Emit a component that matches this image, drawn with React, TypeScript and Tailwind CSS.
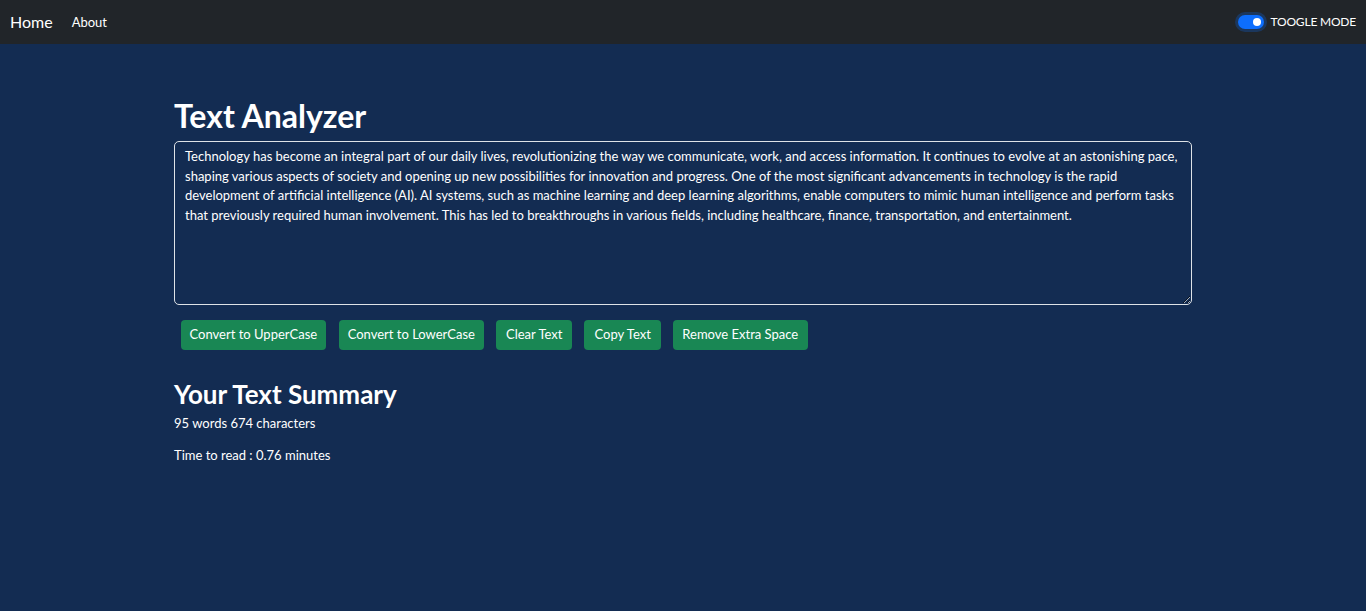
import React, { useState } from 'react';

const initialText =
  'Technology has become an integral part of our daily lives, revolutionizing the way we communicate, work, and access information. It continues to evolve at an astonishing pace, shaping various aspects of society and opening up new possibilities for innovation and progress. One of the most significant advancements in technology is the rapid development of artificial intelligence (AI). AI systems, such as machine learning and deep learning algorithms, enable computers to mimic human intelligence and perform tasks that previously required human involvement. This has led to breakthroughs in various fields, including healthcare, finance, transportation, and entertainment.';

export default function App() {
  const [text, setText] = useState(initialText);
  const [dark, setDark] = useState(true);

  const words = text.split(/\s+/).filter((w) => w.length > 0).length;
  const chars = text.length;

  return (
    <div className="min-h-screen bg-[#132c52] font-['Lato','Noto_Sans',sans-serif] text-white">
      <nav className="flex h-[44px] items-center bg-[#212529] px-[10px]">
        <a className="text-[16px] text-white">Home</a>
        <a className="ml-[19px] mt-[1px] text-[13px] text-white">About</a>
        <div className="ml-auto flex items-center">
          <button
            onClick={() => setDark(!dark)}
            className="relative h-[14px] w-[26px] rounded-full bg-[#0d6efd] ring-[3px] ring-[#0d6efd]/25"
          >
            <span className="absolute right-[3px] top-[3px] h-[8px] w-[8px] rounded-full bg-white" />
          </button>
          <span className="ml-[7px] text-[12px] tracking-[-0.2px]">TOOGLE MODE</span>
        </div>
      </nav>

      <main className="mx-auto w-[1018px]">
        <h1 className="mt-[53px] text-[32px] font-bold leading-[38px]">Text Analyzer</h1>
        <textarea
          value={text}
          onChange={(e) => setText(e.target.value)}
          className="mt-[6px] block h-[164px] w-full rounded-[5px] border border-[#dee2e6] bg-[#132c52] px-[10px] py-[5px] text-[13px] leading-[19.5px] text-white outline-none"
        />
        <div className="mt-[15px] flex gap-[12px] pl-[7px]">
          <button onClick={() => setText(text.toUpperCase())} className="mr-[1px] h-[30px] rounded-[4px] bg-[#198754] px-[8.5px] text-[13px]">
            Convert to UpperCase
          </button>
          <button onClick={() => setText(text.toLowerCase())} className="h-[30px] rounded-[4px] bg-[#198754] px-[9px] text-[13px]">
            Convert to LowerCase
          </button>
          <button onClick={() => setText('')} className="h-[30px] rounded-[4px] bg-[#198754] px-[10px] text-[13px]">
            Clear Text
          </button>
          <button onClick={() => navigator.clipboard?.writeText(text)} className="h-[30px] rounded-[4px] bg-[#198754] px-[10px] text-[13px]">
            Copy Text
          </button>
          <button onClick={() => setText(text.split(/[ ]+/).join(' '))} className="h-[30px] rounded-[4px] bg-[#198754] px-[9.5px] text-[13px]">
            Remove Extra Space
          </button>
        </div>
        <h2 className="mt-[29px] text-[26px] font-bold leading-[30px]">Your Text Summary</h2>
        <p className="mt-[5px] text-[13px] leading-[19px]">
          {words} words {chars} characters
        </p>
        <p className="mt-[13px] text-[13px] leading-[19px]">Time to read : {(0.008 * words).toFixed(2)} minutes</p>
      </main>
    </div>
  );
}
